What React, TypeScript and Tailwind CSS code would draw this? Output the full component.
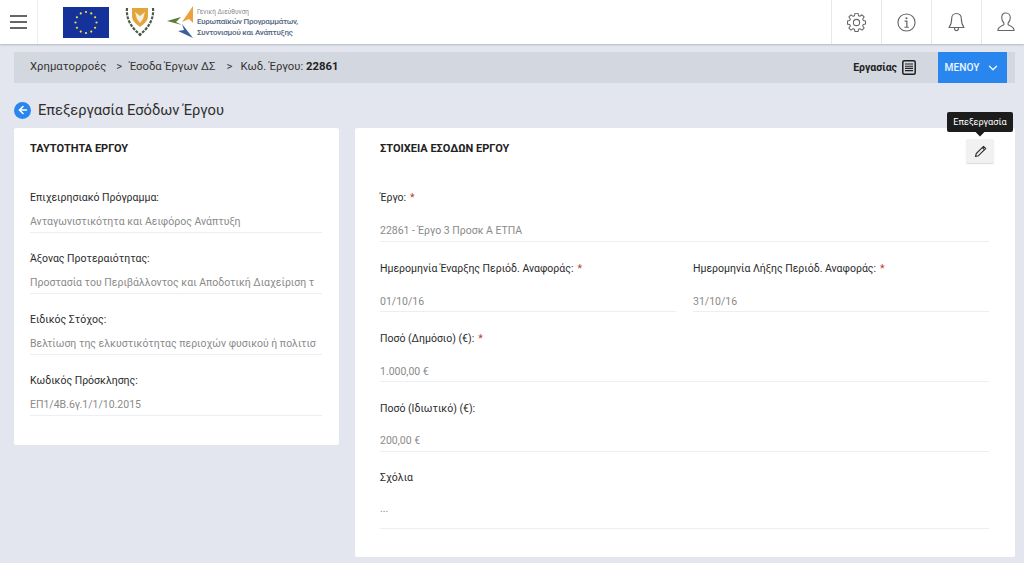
import React from "react";
import { ChevronDown, ArrowLeft } from "lucide-react";

const EuFlag = () => (
  <svg width="46" height="31" viewBox="0 0 46 31" className="block">
    <rect width="46" height="31" fill="#14329a" />
    {Array.from({ length: 12 }).map((_, i) => {
      const a = (i * Math.PI) / 6;
      return <circle key={i} cx={23 + 10.5 * Math.cos(a)} cy={15.5 + 10.5 * Math.sin(a)} r="1.1" fill="#f6e04a" />;
    })}
  </svg>
);

const CyprusCrest = () => (
  <svg width="30" height="30" viewBox="0 0 30 30" className="block">
    <path d="M7 1h16v8c0 5-4 8-8 11C11 17 7 14 7 9z" fill="#e2a53c" />
    <path d="M10 5l5 4 5-4-2 7-3 4-3-4z" fill="#f4efe0" />
    <path d="M2 1c-1 11 4 20 15 28M28 1c1 11-4 20-15 28" fill="none" stroke="#4d5a45" strokeWidth="2.2" strokeDasharray="3 1.2" />
  </svg>
);

const ArrowsLogo = () => (
  <svg width="28" height="32" viewBox="0 0 28 32" className="block">
    <path d="M0 15l14-4-5 5 6 3z" fill="#5f7a3a" />
    <path d="M26 0v17l-4-4-7 3z" fill="#eba13f" />
    <path d="M15 18l11 14-15-7 6-1z" fill="#3c5f9e" />
  </svg>
);

const GearIcon = () => (
  <svg width="19" height="19" viewBox="0 0 20 20" fill="none" stroke="#666" strokeWidth="1.1" strokeLinejoin="round">
    <path d="M8.400 1h3.200l.5 2.600 1.500.6 2.200-1.500 2.200 2.200-1.500 2.200.6 1.500 2.400.6v3.200l-2.400.5-.6 1.500 1.500 2.200-2.200 2.200-2.200-1.500-1.500.6-.5 2.400H8.400l-.5-2.400-1.500-.6-2.200 1.500L2 16.700l1.500-2.200-.6-1.500-2.400-.5V9.300l2.400-.6.6-1.500L2 5l2.200-2.200 2.200 1.500 1.500-.6z" transform="translate(0 -.8)" />
    <circle cx="10" cy="10" r="3.300" />
  </svg>
);

const InfoIcon = () => (
  <svg width="19" height="19" viewBox="0 0 20 20" fill="none" stroke="#666">
    <circle cx="10" cy="10" r="9" strokeWidth="1.2" />
    <circle cx="10" cy="5.500" r="1.100" fill="#666" stroke="none" />
    <path d="M8 8.500h2.400v6.500M7.800 15h4.600" strokeWidth="1.300" />
  </svg>
);

const BellIcon = () => (
  <svg width="17" height="20" viewBox="0 0 17 20" fill="none" stroke="#666" strokeWidth="1.1" strokeLinejoin="round">
    <path d="M8.500 1.500c-3 0-4.800 2.200-4.800 5 0 4.500-.7 6.500-2.700 9h15c-2-2.500-2.700-4.500-2.700-9 0-2.800-1.800-5-4.800-5z" />
    <path d="M6.500 15.800c0 2 1 3 2 3s2-1 2-3" />
  </svg>
);

const UserIcon = () => (
  <svg width="18" height="20" viewBox="0 0 18 20" fill="none" stroke="#666" strokeWidth="1.100" strokeLinejoin="round">
    <path d="M9 1c-2.700 0-4.300 2-4.300 4.800 0 2.200 1 4 2.200 5.200v1.800c-2 .9-6 1.800-6 5.700h16.200c0-3.900-4-4.800-6-5.700V11c1.200-1.200 2.200-3 2.200-5.200C13.300 3 11.700 1 9 1z" />
  </svg>
);

const HeaderIcon = ({ children, last }: { children: React.ReactNode; last?: boolean }) => (
  <div className={last ? "flex w-[43px] items-center justify-start border-l border-[#e6e8ec] pl-[15px]" : "flex w-[50px] items-center justify-center border-l border-[#e6e8ec]"}>
    {children}
  </div>
);

const Field = ({
  label,
  value,
  required,
  className = "",
  box = "h-[27px] pt-[8px]",
}: {
  label: string;
  value: string;
  required?: boolean;
  className?: string;
  box?: string;
}) => (
  <div className={className}>
    <div className="h-[17px] text-[10.5px] leading-[17px] text-[#2b2b2b]">
      {label}
      {required && <span className="ml-1 text-[#c0392b]">*</span>}
    </div>
    <div className={`overflow-hidden whitespace-nowrap border-b border-[#eceef1] text-[10.5px] leading-[15px] text-[#8a8a8a] ${box}`}>
      {value}
    </div>
  </div>
);

export default function App() {
  return (
    <div className="h-[563px] w-[1024px] overflow-hidden bg-[#e3e6ee] font-['Roboto',sans-serif]">
      <header className="flex h-[44px] items-stretch justify-between bg-white shadow-[0_1px_2px_rgba(0,0,0,0.2)]">
        <div className="flex items-stretch">
          <div className="flex w-[38px] flex-col items-center justify-center gap-[4.5px] border-r border-[#eceef1]">
            <span className="h-[1.5px] w-[17px] bg-[#666]" />
            <span className="h-[1.5px] w-[17px] bg-[#666]" />
            <span className="h-[1.5px] w-[17px] bg-[#666]" />
          </div>
          <div className="ml-[25px] flex items-center">
            <EuFlag />
            <div className="ml-[16px]"><CyprusCrest /></div>
            <div className="ml-[12px]"><ArrowsLogo /></div>
            <div className="ml-[2px] w-[110px] pt-[2px] text-[#54677f]">
              <div className="text-[6.5px] leading-[9px] text-[#8a8a8a]">Γενική Διεύθυνση</div>
              <div className="whitespace-nowrap text-[8px] font-medium leading-[10.5px] tracking-[-0.25px]">Ευρωπαϊκών Προγραμμάτων,</div>
              <div className="whitespace-nowrap text-[8px] font-medium leading-[10.5px] tracking-[-0.25px]">Συντονισμού και Ανάπτυξης</div>
            </div>
          </div>
        </div>
        <div className="flex items-stretch">
          <HeaderIcon><GearIcon /></HeaderIcon>
          <HeaderIcon><InfoIcon /></HeaderIcon>
          <HeaderIcon><BellIcon /></HeaderIcon>
          <HeaderIcon last><UserIcon /></HeaderIcon>
        </div>
      </header>

      <div className="ml-[14px] mr-[9px] mt-[8px] flex h-[31px] items-center justify-between bg-[#d3d7e0] pl-[16px] pr-[8px]">
        <div className="flex items-center text-[11.3px] text-[#333]">
          <span>Χρηματορροές</span>
          <span className="ml-[10px] mr-[7px]">&gt;</span>
          <span>Έσοδα Έργων ΔΣ</span>
          <span className="ml-[11px] mr-[8px]">&gt;</span>
          <span>Κωδ. Έργου:&nbsp;<b className="font-bold text-[#222]">22861</b></span>
        </div>
        <div className="flex h-full items-center">
          <span className="text-[10.5px] font-bold text-[#222]">Εργασίας</span>
          <svg width="14" height="15" viewBox="0 0 14 15" className="ml-[5px]" fill="none" stroke="#1f1f1f">
            <rect x="0.8" y="0.8" width="12.4" height="13.4" rx="1.5" strokeWidth="1.5" />
            <path d="M3 4h8M3 6.2h8M3 8.400h8M3 10.600h8" strokeWidth="1.1" />
          </svg>
          <button type="button" className="ml-[22px] flex h-full w-[69px] items-center justify-center gap-[7px] bg-[#2a86ef] text-[10.2px] font-medium text-[#eef5ff]">
            ΜΕΝΟΥ
            <ChevronDown size={14} strokeWidth={2.4} />
          </button>
        </div>
      </div>

      <div className="ml-[14px] mt-[15px] flex h-[24px] items-center">
        <span className="flex h-[17px] w-[17px] items-center justify-center rounded-full bg-[#2a86ef] text-white">
          <ArrowLeft size={12} strokeWidth={3.2} />
        </span>
        <h1 className="ml-[7px] text-[14.7px] font-normal text-[#2f2f2f]">Επεξεργασία Εσόδων Έργου</h1>
      </div>

      <div className="ml-[14px] mt-[6px] flex items-start gap-[16px]">
        <section className="h-[317px] w-[325px] rounded-[2px] bg-white pl-[16px] pr-[17px] pt-[14px]">
          <h2 className="h-[14px] text-[11px] font-bold leading-[14px] text-[#222]">ΤΑΥΤΟΤΗΤΑ ΕΡΓΟΥ</h2>
          <div className="mt-[33px] flex flex-col gap-[17px]">
            <Field label="Επιχειρησιακό Πρόγραμμα:" value="Ανταγωνιστικότητα και Αειφόρος Ανάπτυξη" />
            <Field label="Άξονας Προτεραιότητας:" value="Προστασία του Περιβάλλοντος και Αποδοτική Διαχείριση τ" />
            <Field label="Ειδικός Στόχος:" value="Βελτίωση της ελκυστικότητας περιοχών φυσικού ή πολιτισ" />
            <Field label="Κωδικός Πρόσκλησης:" value="ΕΠ1/4Β.6γ.1/1/10.2015" />
          </div>
        </section>

        <section className="relative h-[429px] w-[660px] rounded-[2px] bg-white pl-[25px] pr-[26px] pt-[14px]">
          <h2 className="h-[14px] text-[11px] font-bold leading-[14px] text-[#222]">ΣΤΟΙΧΕΙΑ ΕΣΟΔΩΝ ΕΡΓΟΥ</h2>
          <button type="button" className="absolute right-[21px] top-[11px] flex h-[24px] w-[28px] items-center justify-center rounded-[2px] bg-[#f1f1f1] shadow-[0_1px_1px_rgba(0,0,0,0.15)]">
            <svg width="13" height="13" viewBox="0 0 13 13" fill="none" stroke="#333" strokeWidth="1.1" strokeLinejoin="round">
              <path d="M1.500 11.500l.8-3L9.500 1.300l2.200 2.200L4.500 10.700z" />
              <path d="M8.300 2.500l2.200 2.200" />
            </svg>
          </button>
          <div className="absolute right-[2px] top-[-16px] flex h-[20px] w-[66px] items-center justify-center rounded-[2px] bg-[#1c1c1c] text-[9.2px] text-white">
            Επεξεργασία
            <span className="absolute bottom-[-3px] left-1/2 h-[7px] w-[7px] -translate-x-1/2 rotate-45 bg-[#1c1c1c]" />
          </div>
          <div className="mt-[33px] flex flex-col gap-[17px]">
            <Field box="h-[36px] pt-[17px]" label="Έργο:" required value="22861 - Έργο 3 Προσκ Α ΕΤΠΑ" />
            <div className="mt-[1px] flex gap-[17px]">
              <Field box="h-[35px] pt-[17px]" className="w-[296px]" label="Ημερομηνία Έναρξης Περιόδ. Αναφοράς:" required value="01/10/16" />
              <Field box="h-[35px] pt-[17px]" className="w-[296px]" label="Ημερομηνία Λήξης Περιόδ. Αναφοράς:" required value="31/10/16" />
            </div>
            <Field box="h-[35px] pt-[17px]" className="mt-[1px]" label="Ποσό (Δημόσιο) (€):" required value="1.000,00 €" />
            <Field box="h-[35px] pt-[16px]" className="mt-[1px]" label="Ποσό (Ιδιωτικό) (€):" value="200,00 €" />
            <Field box="h-[43px] pt-[15px]" label="Σχόλια" value="..." />
          </div>
        </section>
      </div>
    </div>
  );
}
